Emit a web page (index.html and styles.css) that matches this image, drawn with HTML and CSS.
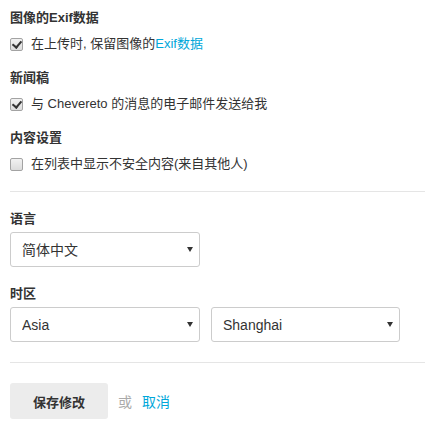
FILE: index.html
```html
<!DOCTYPE html>
<html lang="zh-CN">
<head>
<meta charset="utf-8">
<title>设置</title>
<link rel="stylesheet" href="styles.css">
</head>
<body>
<div class="page">
  <section class="group">
    <h4 class="group-title">图像的Exif数据</h4>
    <label class="check-row"><input type="checkbox" class="check" checked><span>在上传时, 保留图像的<a class="link" href="#">Exif数据</a></span></label>
  </section>
  <section class="group">
    <h4 class="group-title">新闻稿</h4>
    <label class="check-row"><input type="checkbox" class="check" checked><span>与 Chevereto 的消息的电子邮件发送给我</span></label>
  </section>
  <section class="group">
    <h4 class="group-title">内容设置</h4>
    <label class="check-row"><input type="checkbox" class="check"><span>在列表中显示不安全内容(来自其他人)</span></label>
  </section>

  <hr class="divider">

  <div class="field">
    <h4 class="field-label">语言</h4>
    <div class="select-wrap w190"><select class="select"><option>简体中文</option></select></div>
  </div>
  <div class="field field-tz">
    <h4 class="field-label">时区</h4>
    <div class="select-row">
      <div class="select-wrap w190"><select class="select"><option>Asia</option></select></div>
      <div class="select-wrap w189"><select class="select"><option>Shanghai</option></select></div>
    </div>
  </div>

  <hr class="divider divider-bottom">

  <div class="actions">
    <button class="btn" type="button">保存修改</button>
    <span class="or">或</span>
    <a class="cancel" href="#">取消</a>
  </div>
</div>
</body>
</html>
```
FILE: styles.css
```css
* { box-sizing: border-box; }
html, body { margin: 0; padding: 0; background: #fff; }
body {
  font-family: "Liberation Sans", "Noto Sans CJK SC", sans-serif;
  font-size: 13px;
  color: #333;
}
.page {
  padding: 8px 0 0 10px;
}
.group { margin: 0 0 14px 0; }
.group:last-of-type { margin-bottom: 0; }
.group-title, .field-label {
  margin: 0;
  font-size: 13px;
  font-weight: bold;
  line-height: 20px;
  color: #333;
}
.check-row {
  display: flex;
  align-items: center;
  margin-top: 6px;
  height: 20px;
  line-height: 20px;
}
.check {
  -webkit-appearance: none;
  appearance: none;
  position: relative;
  width: 13px;
  height: 13px;
  margin: 0 8px 0 0;
  border: 1px solid #a3a3a3;
  border-radius: 2px;
  background: linear-gradient(#f2f2f2, #dcdcdc);
  flex: none;
}
.check:checked::after {
  content: "";
  position: absolute;
  left: 3px;
  top: 0px;
  width: 4px;
  height: 7px;
  border-right: 2px solid #333;
  border-bottom: 2px solid #333;
  transform: rotate(40deg);
}
.link { color: #00a7da; text-decoration: none; }
.divider {
  border: 0;
  border-top: 1px solid #e5e5e5;
  margin: 17px 0 0 0;
  height: 0;
}
.field { margin-top: 17px; }
.field-tz { margin-top: 17px; }
.field-label { margin-bottom: 3px; }
.select-row { display: flex; gap: 11px; }
.select-wrap { position: relative; }
.w190 { width: 190px; }
.w189 { width: 189px; }
.select-wrap::after {
  content: "";
  position: absolute;
  right: 7px;
  top: 15px;
  border-left: 3.5px solid transparent;
  border-right: 3.5px solid transparent;
  border-top: 5px solid #333;
  pointer-events: none;
}
.select {
  -webkit-appearance: none;
  appearance: none;
  display: block;
  width: 100%;
  height: 35px;
  padding: 0 20px 0 11px;
  border: 1px solid #ccc;
  border-radius: 3px;
  background: #fff;
  font-family: "Liberation Sans", "Noto Sans CJK SC", sans-serif;
  font-size: 14px;
  color: #333;
}
.divider-bottom { margin-top: 20px; }
.actions {
  display: flex;
  align-items: center;
  margin-top: 20px;
}
.btn {
  width: 98px;
  height: 36px;
  border: 0;
  border-radius: 3px;
  background: #ececec;
  font-family: "Liberation Sans", "Noto Sans CJK SC", sans-serif;
  font-size: 13px;
  font-weight: bold;
  color: #333;
  padding: 0;
}
.or {
  margin-left: 10px;
  font-size: 14px;
  color: #aaa;
}
.cancel {
  margin-left: 10px;
  font-size: 14px;
  color: #00a7da;
  text-decoration: none;
}
```
